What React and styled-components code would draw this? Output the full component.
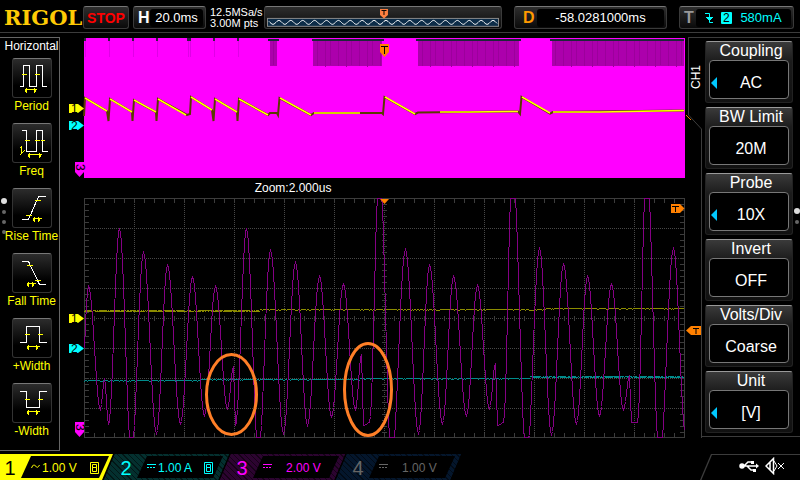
import React, { useState } from 'react';
import styled, { createGlobalStyle } from 'styled-components';

const GlobalStyle = createGlobalStyle`
  * {
    box-sizing: border-box;
  }
  body {
    margin: 0;
    background: #000;
    color: #fff;
    font-family: 'Liberation Sans', Arial, sans-serif;
  }
  button {
    font-family: inherit;
    color: inherit;
    border: none;
    padding: 0;
    cursor: pointer;
  }
`;

const Screen = styled.div`
  min-height: 100vh;
  display: flex;
  flex-direction: column;
  overflow: hidden;
`;

const Header = styled.header`
  display: flex;
  align-items: center;
  gap: 4px;
  height: 33px;
  padding: 3px 6px 0 4px;
  border-bottom: 1px solid #3c3c3c;
`;

const Logo = styled.div`
  width: 75px;
  font-family: 'DejaVu Serif', serif;
  font-size: 21px;
  font-weight: bold;
  line-height: 24px;
  color: #ffcb05;
`;

const StatusBox = styled.div`
  display: flex;
  align-items: center;
  height: 23px;
  padding: 0 2px 0 4px;
  border: 1px solid #3a3a3a;
  border-top-color: #777;
  border-radius: 3px;
  background: linear-gradient(#2e2e2e, #0a0a0a);
  font-size: 13px;
`;

const RunState = styled.button`
  width: 46px;
  height: 23px;
  border: 1px solid #3a3a3a;
  border-top-color: #777;
  border-radius: 3px;
  background: linear-gradient(#2e2e2e, #0a0a0a);
  color: #f00;
  font-size: 14px;
  font-weight: bold;
`;

const BoxTag = styled.span`
  width: ${({ $width }) => $width || '12px'};
  font-size: 16px;
  font-weight: bold;
  color: ${({ $color }) => $color || '#fff'};
`;

const BoxValue = styled.span`
  flex: 1;
  display: flex;
  justify-content: center;
  align-items: center;
  gap: 8px;
  height: 18px;
  border-radius: 3px;
  background: #000;
  color: ${({ $color }) => $color || '#fff'};
`;

const Timebase = styled(StatusBox)`
  width: 73px;
`;

const Delay = styled(StatusBox)`
  width: 153px;
  margin-left: 8px;
  padding-left: 8px;
`;

const Trigger = styled(StatusBox)`
  width: 115px;
  margin-left: 8px;
`;

const Sampling = styled.div`
  width: 50px;
  white-space: nowrap;
  font-size: 11px;
  line-height: 11px;
`;

const MemoryBar = styled.div`
  flex: 1;
  height: 23px;
  border: 1px solid #3a3a3a;
  border-top-color: #777;
  border-radius: 3px;
  background: linear-gradient(#2e2e2e, #0a0a0a);
  padding: 1px 2px;
  svg {
    display: block;
    width: 100%;
    height: auto;
  }
`;

const Body = styled.div`
  flex: 1;
  display: flex;
  align-items: flex-start;
  padding-top: 4px;
`;

const Measures = styled.nav`
  position: relative;
  width: 60px;
  height: 414px;
  border: 1px solid #666;
  border-left: none;
  display: flex;
  flex-direction: column;
  align-items: center;
  padding-left: 4px;
  font-size: 12px;
`;

const MeasuresTitle = styled.h2`
  margin: 0 0 4px;
  font-size: 12px;
  font-weight: normal;
  line-height: 16px;
`;

const MeasureButton = styled.button`
  display: flex;
  flex-direction: column;
  align-items: center;
  height: 65px;
  background: none;
  color: #ff0;
  font-size: 12px;
  line-height: 16px;
  white-space: nowrap;
`;

const MeasureIcon = styled.svg`
  width: 40px;
  height: 40px;
  border: 1px solid #333;
  border-top-color: #777;
  border-radius: 3px;
  background: linear-gradient(#2c2c2c, #000 70%);
  fill: none;
  shape-rendering: crispEdges;
`;

const Dots = styled.div`
  position: absolute;
  top: ${({ $top }) => $top || '160px'};
  ${({ $side }) => $side || 'left'}: 0;
  display: flex;
  flex-direction: column;
  align-items: center;
  gap: 6px;
  width: 7px;
`;

const Dot = styled.i`
  width: ${({ $on }) => ($on ? '6px' : '4px')};
  height: ${({ $on }) => ($on ? '6px' : '4px')};
  border-radius: 50%;
  background: ${({ $on }) => ($on ? '#ddd' : '#666')};
`;

const Scope = styled.main`
  flex: 1;
  min-width: 0;
  svg {
    display: block;
    width: 100%;
    height: auto;
    overflow: visible;
  }
`;

const ZoomScale = styled.div`
  padding-left: 31%;
  font-size: 12px;
  line-height: 20px;
`;

const MenuTab = styled.div`
  width: 14px;
  display: flex;
  flex-direction: column;
  align-self: stretch;
`;

const MenuTabLabel = styled.div`
  height: 78px;
  display: flex;
  align-items: center;
  justify-content: center;
  writing-mode: vertical-rl;
  transform: rotate(180deg);
  border: 0 solid #3c3c3c;
  border-width: 0 1px 1px 0;
  font-size: 12px;
`;

const Menu = styled.aside`
  position: relative;
  width: 98px;
  display: flex;
  flex-direction: column;
  gap: 4px;
  padding: 3px 7px 3px 3px;
  border: 1px solid #3c3c3c;
  border-width: 1px 0;
`;

const MenuButton = styled.button`
  height: 62px;
  padding: 0 3px 3px;
  border: 1px solid #222;
  border-top-color: #999;
  border-radius: 3px;
  background: linear-gradient(#3a3a3a, #1c1c1c 32%, #111);
  font-size: 16px;
`;

const MenuTitle = styled.span`
  display: block;
  padding-left: 4px;
  line-height: 18px;
`;

const MenuValue = styled.span`
  position: relative;
  display: flex;
  align-items: center;
  justify-content: center;
  height: 39px;
  padding: 6px 0 0 4px;
  border: 1px solid #777;
  border-radius: 4px;
  background: #000;
`;

const Arrow = styled.i`
  position: absolute;
  left: 1px;
  top: 16px;
  border: 6px solid transparent;
  border-right: 6px solid #00c8ff;
  border-left: none;
`;

const Footer = styled.footer`
  display: flex;
  height: 26px;
  overflow: hidden;
`;

const ChannelTab = styled.button`
  display: flex;
  flex: none;
  width: 125px;
  height: 26px;
  margin-left: ${({ $first }) => ($first ? '-12px' : '-9px')};
  padding: 2px ${({ $active }) => ($active ? '4px' : '6px')} 2px 0;
  color: ${({ $color }) => $color};
  background: ${({ $active, $color, $back }) =>
    $active ? $color : `repeating-linear-gradient(45deg, ${$back} 0 3px, #0008 3px 4px), ${$back}`};
  clip-path: polygon(11px 0, 100% 0, calc(100% - 11px) 100%, 0 100%);
`;

const ChannelNumber = styled.span`
  width: 33px;
  padding-left: 11px;
  font-size: 20px;
  line-height: 24px;
  color: ${({ $active }) => ($active ? '#000' : 'inherit')};
`;

const ChannelInfo = styled.span`
  flex: 1;
  display: flex;
  align-items: center;
  gap: 2px;
  padding: 1px 10px 0 10px;
  background: #000;
  clip-path: polygon(10px 0, 100% 0, calc(100% - 10px) 100%, 0 100%);
  font-size: 12px;
  svg {
    fill: none;
    stroke: currentColor;
  }
`;

const ChannelScale = styled.span`
  flex: 1;
  text-align: left;
  padding-left: ${({ $shift }) => ($shift ? '12px' : '0')};
  white-space: nowrap;
`;

const SystemTray = styled.div`
  margin-left: auto;
  width: 100px;
  height: 26px;
  padding: 1px;
  background: #3c3c3c;
  clip-path: polygon(11px 0, 100% 0, 100% 100%, 0 100%);
`;

const TrayInner = styled.div`
  display: flex;
  align-items: center;
  gap: 5px;
  height: 26px;
  padding: 0 0 4px 38px;
  margin-right: -1px;
  background: #000;
  clip-path: polygon(11px 0, 100% 0, 100% 100%, 0 100%);
`;

const measures = [
  {
    label: 'Period',
    white: 'M7 28h4V7h6v21h7V7h6v21h4',
    yellow: 'M9 16h5M22 16h5M12 31h12M14 29v5M13 30v3M22 29v5M23 30v3',
  },
  {
    label: 'Freq',
    white: 'M9 7h5v21h10V7h6v21h5',
    yellow: 'M12 17h5M22 17h5M28 17h4M15 31h14M17 29v5M16 30v3M27 29v5M28 30v3M7 25l2-2v6M7 32l5-5',
  },
  {
    label: 'Rise Time',
    white: 'M9 31h7L26 8h7',
    yellow: 'M13 27h6M22 12h6M20 30h9M22 28v5M21 29v3M26 28v5M27 29v3',
  },
  {
    label: 'Fall Time',
    white: 'M9 8h7l11 23h6',
    yellow: 'M14 12h6M22 27h6M14 30h9M16 28v5M15 29v3M20 28v5M21 29v3',
  },
  {
    label: '+Width',
    white: 'M7 24h7V8h13v16h7',
    yellow: 'M12 16h5M25 16h5M14 28h13M16 26v5M15 27v3M24 26v5M25 27v3',
  },
  {
    label: '-Width',
    white: 'M7 8h7v16h13V8h7',
    yellow: 'M12 16h5M25 16h5M14 28h13M16 26v5M15 27v3M24 26v5M25 27v3',
  },
];

const menuItems = [
  { title: 'Coupling', value: 'AC', arrow: true },
  { title: 'BW Limit', value: '20M' },
  { title: 'Probe', value: '10X', arrow: true },
  { title: 'Invert', value: 'OFF' },
  { title: 'Volts/Div', value: 'Coarse' },
  { title: 'Unit', value: '[V]', arrow: true },
];

const channels = [
  { id: 1, scale: '1.00 V', color: '#ff0', coupling: 'ac', bw: true },
  { id: 2, scale: '1.00 A', color: '#0ff', back: '#04302f', coupling: 'dc', bw: true },
  { id: 3, scale: '2.00 V', color: '#f0f', back: '#2c0430', coupling: 'dc' },
  { id: 4, scale: '1.00 V', color: '#666', back: '#04162c', coupling: 'dc' },
];

// peaks and valleys of channel 3, anything past the grid gets clipped
const extrema = [
  [80, 409], [88, 286], [100, 409], [104, 378], [108, 424], [119, 228], [131, 455], [143, 252],
  [156, 433], [167, 265], [180, 423], [192, 277], [204, 415], [215, 286], [227, 408], [233, 366],
  [235, 425], [246, 228], [258, 455], [270, 250], [283, 433], [295, 262], [307, 425], [319, 276],
  [331, 416], [343, 284], [355, 409], [361, 354], [363, 425], [369, 422], [379, 160], [391, 462],
  [405, 249], [418, 433], [429, 265], [442, 423], [453, 276], [466, 415], [477, 285], [489, 408],
  [495, 363], [497, 425], [503, 422], [512, 160], [526, 462], [539, 248], [551, 434], [563, 264],
  [576, 423], [587, 276], [599, 415], [611, 284], [623, 409], [629, 376], [631, 422], [637, 422],
  [646, 160], [659, 462], [673, 248], [685, 433],
];

const buildTrace = () => {
  const points = [];
  let seg = 0;
  for (let x = 84; x <= 684; x += 1) {
    while (x > extrema[seg + 1][0]) seg += 1;
    const [x0, y0] = extrema[seg];
    const [x1, y1] = extrema[seg + 1];
    const t = (1 - Math.cos((Math.PI * (x - x0)) / (x1 - x0))) / 2;
    const y = Math.round(y0 + (y1 - y0) * t);
    points.push(`${x}.5,${Math.max(198, Math.min(437, y))}.5`);
  }
  return points.join(' ');
};

// one or two pixels per column, the way the scope flickers between levels
const buildNoise = (level, thickUntil, thickFrom, seed) => {
  let d = '';
  for (let x = 84; x < 684; x += 1) {
    const r = Math.abs(Math.sin(x * seed) * 1000) % 1;
    const thick = (x < thickUntil || x > thickFrom) && r < 0.7;
    const shift = r > 0.8 ? 1 : 0;
    d += `M${x} ${level(x) + shift}h1v${thick ? 2 : 1}h-1z`;
  }
  return d;
};

const ch3Trace = buildTrace();
const ch1Trace = buildNoise((x) => (x < 260 ? 310 : x < 545 ? 309 : 308), 260, 999, 12.9);
const ch2Trace = buildNoise((x) => (x < 200 ? 380 : x < 360 ? 379 : x < 530 ? 378 : 376), 0, 532, 7.7);

const range = (from, to, step) => {
  const out = [];
  for (let i = from; i <= to; i += step) out.push(i);
  return out;
};

const gridLines = [
  ...range(134, 634, 50).map((x) => `M${x}.5 198V437`),
  ...range(228, 408, 30).map((y) => `M84 ${y}.5H684`),
].join('');

const gridTicks = [
  ...range(94, 674, 10).map((x) => `M${x}.5 198v5M${x}.5 316v5M${x}.5 433v5`),
  ...range(204, 432, 6).map((y) => `M84 ${y}.5h5M382 ${y}.5h5M680 ${y}.5h5`),
].join('');

const ramps =
  'M85 98L107 111M110 99L132 112M134 100L156 112M158 99L186 115M191 97L212 110M215 99L237 112M239 99L268 115M280 98L311 115M385 97L415 114M522 97L550 113M314 113H360M440 112H470L518 111.5M553 112H600L684 110.5';

const edges =
  'M84 116L85 98L107 111L108.5 121L110 99L132 112L132.5 121L134 100L156 112L156.5 121L158 99L187 115L190 114L191 97L212 110L213.5 121L215 99L237 112L237.5 121L239 99L268 115L270 113H277L278 115L279.5 98L311 115L314 113H382L383 114L384.5 97L415 114L418 112.5L518 111.5L520 114L521.5 97L550 113.5L553 112L684 110.5';

const bursts = [[270, 7], [313, 69], [418, 101], [552, 132]];
const gaps = [[268, 11], [312, 72], [416, 105], [550, 134]];

const Marker = ({ y, color, label }) => (
  <g>
    <path d={`M69 ${y}h9l6 4.5l-6 4.5h-9z`} fill={color} />
    <text x="71" y={y + 9} fontSize="12" fill="#000">{label}</text>
  </g>
);

const GroundMarker = ({ y }) => (
  <g>
    <path d={`M75 ${y}h9v10l-4.5 5l-4.5 -5z`} fill="#f0f" />
    <text transform={`translate(76 ${y + 2}) rotate(90)`} fontSize="12" fill="#000">3</text>
  </g>
);

const Overview = () => (
  <svg viewBox="60 37 628 141" role="img" aria-label="Full record">
    <rect x="84" y="38" width="601" height="140" fill="#f0f" />
    <g shapeRendering="crispEdges">
      {gaps.map(([x, w]) => (
        <rect key={x} x={x} y="39" width={w} height="2" fill="#1c2838" />
      ))}
      {bursts.map(([x, w]) => (
        <g key={x}>
          <rect x={x} y="41" width={w} height="25" fill="#ac00ac" />
          {range(x + 3, x + w - 3, 7).map((bx) => (
            <rect key={bx} x={bx + (bx % 3)} y="41" width="1" height={24 + (bx % 3)} fill="#9c009c" />
          ))}
        </g>
      ))}
      {[85, 109, 133, 157, 188, 190, 214, 238].map((x) => (
        <g key={x}>
          <rect x={x - 1} y="38" width="2" height="3" fill="#302040" />
          <rect x={x} y="41" width="1" height="16" fill="#e000e8" />
        </g>
      ))}
    </g>
    <path d={edges} fill="none" stroke="#5a3a00" strokeWidth="2" />
    <path d={ramps} fill="none" stroke="#ff0" strokeWidth="1.5" />
    <path d="M380 44h9v8l-4.5 5l-4.5 -5z" fill="#ff8000" />
    <path d="M381 46.5h7M384.5 46v8" stroke="#000" />
    <path d="M686 115l5 5" stroke="#ff8000" />
    <Marker y={104} color="#ff0" label="1" />
    <Marker y={121} color="#0ff" label="2" />
    <GroundMarker y={162} />
  </svg>
);

const ZoomView = () => (
  <svg viewBox="60 198 628 240" role="img" aria-label="Zoomed waveform">
    <g fill="none" shapeRendering="crispEdges">
      <path d={gridLines} stroke="#484848" strokeDasharray="1 1" />
      <path d={gridTicks} stroke="#3c3c3c" />
      <rect x="84.5" y="198.5" width="600" height="239" stroke="#3c3c3c" />
      <path d={ch1Trace} fill="#8c8c00" />
      <path d={ch2Trace} fill="#008c8c" />
      <polyline points={ch3Trace} stroke="#840084" />
    </g>
    <g fill="none" stroke="#ff7f27" strokeWidth="3">
      <ellipse cx="231.5" cy="394.5" rx="25" ry="40" />
      <ellipse cx="368" cy="389.5" rx="23.5" ry="46" />
    </g>
    <path d="M380 199h9l-4.5 5z" fill="#ff8000" />
    <path d="M671 204h9l4.5 4.5l-4.5 4.5h-9z" fill="#ff8000" />
    <path d="M672 206.5h7M675.5 206v6" stroke="#000" />
    <path d="M701 326h-10l-5 4.5l5 4.5h10z" fill="#ff8000" />
    <path d="M693 328.5h6M696 328v6" stroke="#000" />
    <Marker y={314} color="#ff0" label="1" />
    <Marker y={344} color="#0ff" label="2" />
    <GroundMarker y={422} />
  </svg>
);

const memoryWave = range(2, 232, 1)
  .map((x) => `${x},${(14.5 + 2 * Math.cos(((x - 6) * Math.PI) / 6)).toFixed(1)}`)
  .join(' ');

const App = () => {
  const [active, setActive] = useState(1);

  return (
    <>
      <GlobalStyle />
      <Screen>
        <Header>
          <Logo>RIGOL</Logo>
          <RunState>STOP</RunState>
          <Timebase>
            <BoxTag>H</BoxTag>
            <BoxValue>20.0ms</BoxValue>
          </Timebase>
          <Sampling>
            12.5MSa/s
            <br />
            3.00M pts
          </Sampling>
          <MemoryBar>
            <svg viewBox="0 0 234 20" fill="none">
              <rect x="0.5" y="10.5" width="233" height="8" fill="#0c2c48" stroke="#8a8a8a" />
              <polyline points={memoryWave} stroke="#fff" />
              <path d="M114 1h8v6l-4 3.5l-4 -3.5z" fill="#ff8040" />
              <path d="M115.5 2.5h5M118 2v5" stroke="#000" />
            </svg>
          </MemoryBar>
          <Delay>
            <BoxTag $width="14px" $color="#ff9a00">D</BoxTag>
            <BoxValue>-58.0281000ms</BoxValue>
          </Delay>
          <Trigger>
            <BoxTag $color="#999">T</BoxTag>
            <BoxValue $color="#0ff">
              <svg width="8" height="12" fill="none" stroke="#0ff">
                <path d="M0 1.5h4.5v9h3.5M1 5.5h7M2 6.5h5M3 7.5h3" />
              </svg>
              <svg width="11" height="12">
                <rect width="11" height="12" rx="1" fill="#0ff" />
                <text x="2" y="10" fontSize="12" fill="#000">2</text>
              </svg>
              580mA
            </BoxValue>
          </Trigger>
        </Header>

        <Body>
          <Measures aria-label="Measurements">
            <MeasuresTitle>Horizontal</MeasuresTitle>
            {measures.map((m) => (
              <MeasureButton key={m.label}>
                <MeasureIcon viewBox="1 1 38 38">
                  <path d={m.white} stroke="#fff" transform="translate(.5 .5)" />
                  <path d={m.yellow} stroke="#ff0" transform="translate(.5 .5)" />
                </MeasureIcon>
                {m.label}
              </MeasureButton>
            ))}
            <Dots>
              <Dot $on />
              <Dot />
              <Dot />
              <Dot />
            </Dots>
          </Measures>

          <Scope>
            <Overview />
            <ZoomScale>Zoom:2.000us</ZoomScale>
            <ZoomView />
          </Scope>

          <MenuTab>
            <MenuTabLabel>CH1</MenuTabLabel>
            <svg width="14" height="323" fill="none" stroke="#3c3c3c">
              <path d="M0.5 0L13.5 14V323" />
            </svg>
          </MenuTab>

          <Menu>
            {menuItems.map((item) => (
              <MenuButton key={item.title}>
                <MenuTitle>{item.title}</MenuTitle>
                <MenuValue>
                  {item.arrow && <Arrow />}
                  {item.value}
                </MenuValue>
              </MenuButton>
            ))}
            <Dots $side="right" $top="170px">
              <Dot $on />
              <Dot />
            </Dots>
          </Menu>
        </Body>

        <Footer>
          {channels.map((ch, i) => (
            <ChannelTab
              key={ch.id}
              $first={i === 0}
              $active={active === ch.id}
              $color={ch.color}
              $back={ch.back || '#303004'}
              onClick={() => setActive(ch.id)}
            >
              <ChannelNumber $active={active === ch.id}>{ch.id}</ChannelNumber>
              <ChannelInfo>
                <svg width="9" height="12">
                  {ch.coupling === 'ac' ? (
                    <path d="M0.5 6q2 -5 4 -2t4 -1" />
                  ) : (
                    <path d="M0 2.5h9M0 5.5h2M3 5.5h2M6 5.5h2" />
                  )}
                </svg>
                <ChannelScale $shift={ch.id > 2}>{ch.scale}</ChannelScale>
                {ch.bw && (
                  <svg width="9" height="12">
                    <path d="M0.5 0.5h8v11h-8zM2.5 2.5h4v3h-4zM2.5 5.5h4v4h-4z" />
                  </svg>
                )}
              </ChannelInfo>
            </ChannelTab>
          ))}
          <SystemTray>
            <TrayInner>
              <svg width="21" height="12" fill="none" stroke="#fff" strokeWidth="1.5">
                <path d="M2 6h15M5 6l4 -4h4M8 6l4 4h3" />
                <circle cx="3" cy="6" r="2" fill="#fff" />
                <path d="M17 3.5l3 2.5l-3 2.5z" fill="#fff" stroke="none" />
                <path d="M12 1h3v3h-3zM14 9h3v3h-3z" fill="#fff" stroke="none" />
              </svg>
              <svg width="22" height="18" fill="none" stroke="#fff">
                <path d="M1 9L8.5 1.5v15zM5 5.5v7" strokeWidth="1.5" />
                <path d="M9 4l3 5l-3 5M13 6l6 6M19 6l-6 6" />
              </svg>
            </TrayInner>
          </SystemTray>
        </Footer>
      </Screen>
    </>
  );
};

export default App;
